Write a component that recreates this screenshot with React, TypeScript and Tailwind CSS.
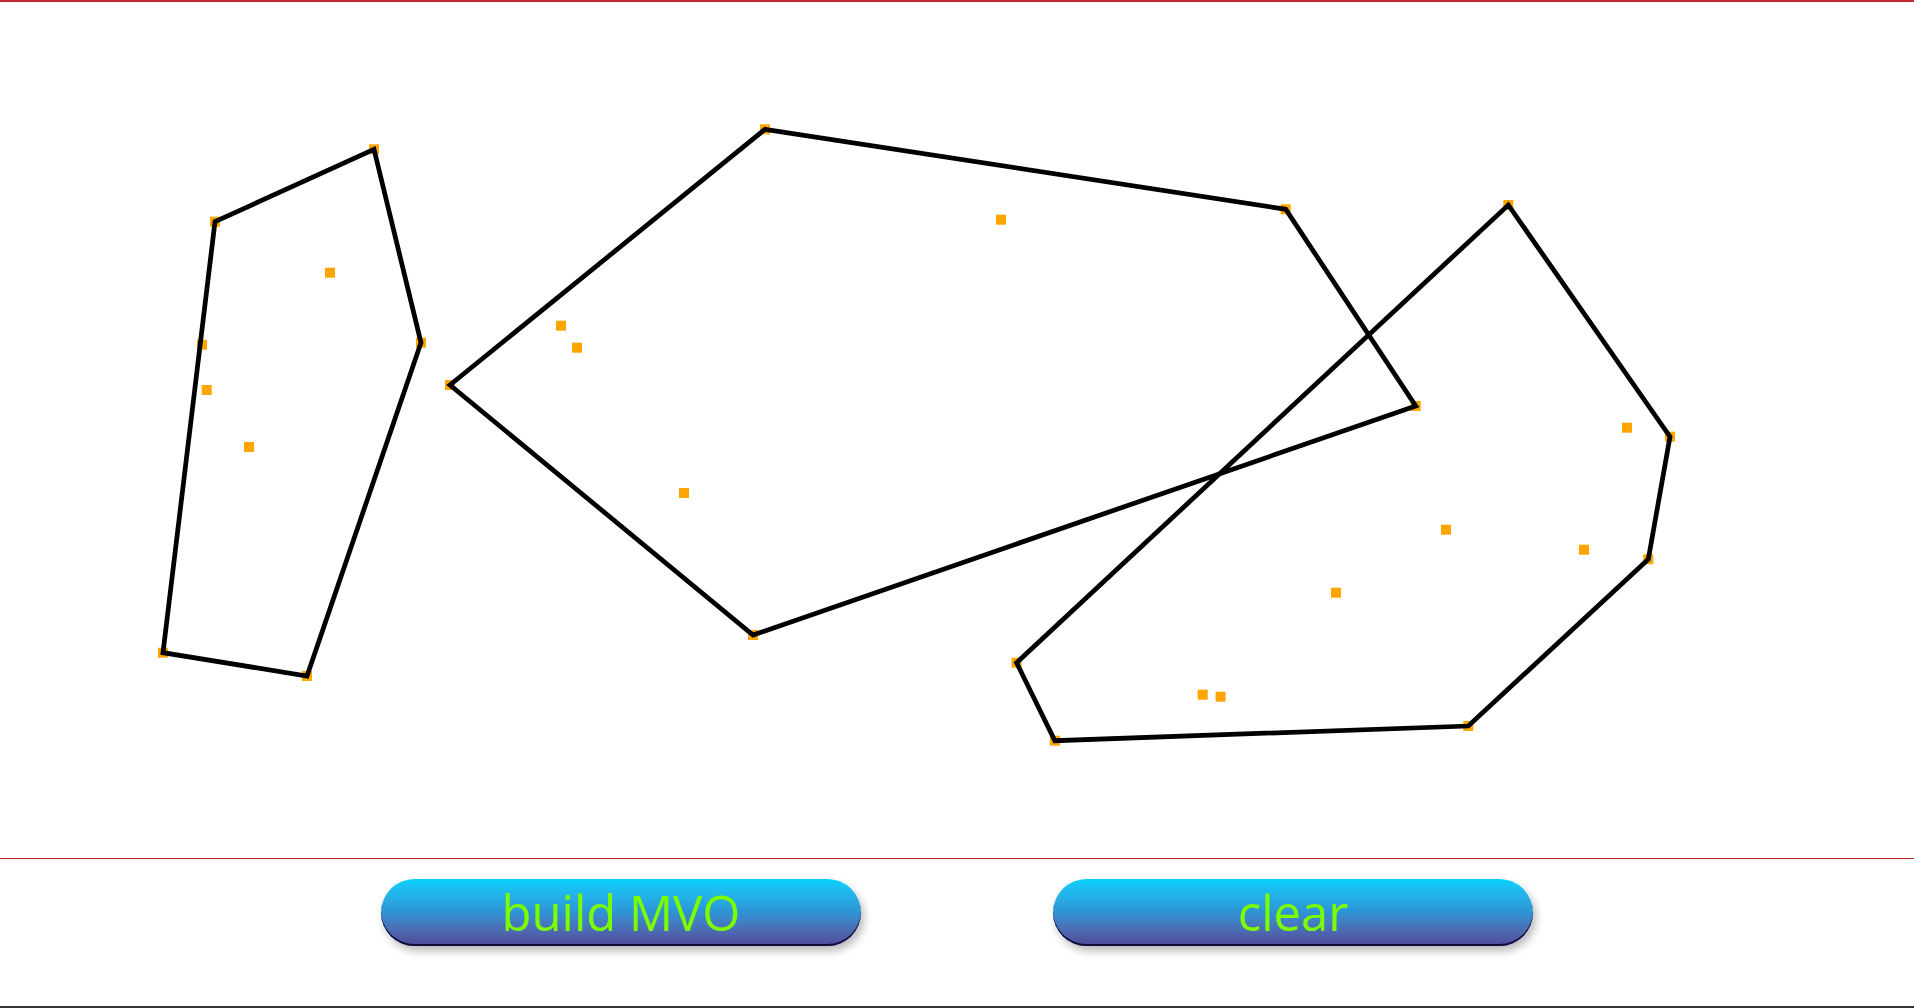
type Pt = [number, number];

// hull outlines (clockwise, as drawn)
const hulls: Pt[][] = [
  [[215, 221.7], [374, 149.3], [421, 342.7], [307, 676], [163, 652.7]],
  [[765, 129.3], [1285.7, 209.3], [1415.7, 406], [753, 635], [450, 385]],
  [[1508.3, 205], [1670, 436.7], [1648.3, 559.3], [1468.3, 726], [1054.9, 740.7], [1016.6, 662.7]],
];

// points that sit inside the hulls
const inner: Pt[] = [
  [330, 272.7], [202, 344.7], [206.7, 390], [249, 447],
  [561, 325.7], [577, 347.7], [1001, 219.7], [684, 493],
  [1627, 427.7], [1446, 529.7], [1584, 549.7], [1336, 592.7], [1202.7, 694.7], [1220.6, 696.7],
];

const allPoints: Pt[] = [...hulls.flat(), ...inner];

const Board = () => (
  <div className="h-[859px] w-full border-t-2 border-b border-[#c0262b] bg-white">
    <svg className="block h-full w-full" viewBox="0 2 1914 856" preserveAspectRatio="none">
      {allPoints.map(([x, y], i) => (
        <rect key={i} x={x - 5} y={y - 5} width={10} height={10} fill="#ffa500" />
      ))}
      {hulls.map((h, i) => (
        <polygon
          key={i}
          points={h.map(([x, y]) => `${x},${y}`).join(" ")}
          fill="none"
          stroke="#000"
          strokeWidth={4.75}
          strokeLinejoin="miter"
        />
      ))}
    </svg>
  </div>
);

const PillButton = ({ label }: { label: string }) => (
  <button
    type="button"
    className="flex h-[67px] w-[480px] items-center justify-center rounded-full bg-gradient-to-b from-[#04d2fb] via-[#2d93d4] to-[#514897] text-[49px] leading-none text-[#7cfc00] shadow-[inset_0_-2px_0_#120c38,3px_5px_9px_rgba(0,0,0,0.28)]"
  >
    <span>{label}</span>
  </button>
);

export default function App() {
  return (
    <div className="flex h-screen w-full flex-col overflow-hidden bg-white font-['Open_Sans','Noto_Sans',sans-serif]">
      <Board />
      <div className="flex flex-1 items-start justify-center gap-[192px] pt-[20px]">
        <PillButton label="build MVO" />
        <PillButton label="clear" />
      </div>
      <div className="h-[2px] w-full bg-[#333]" />
    </div>
  );
}
